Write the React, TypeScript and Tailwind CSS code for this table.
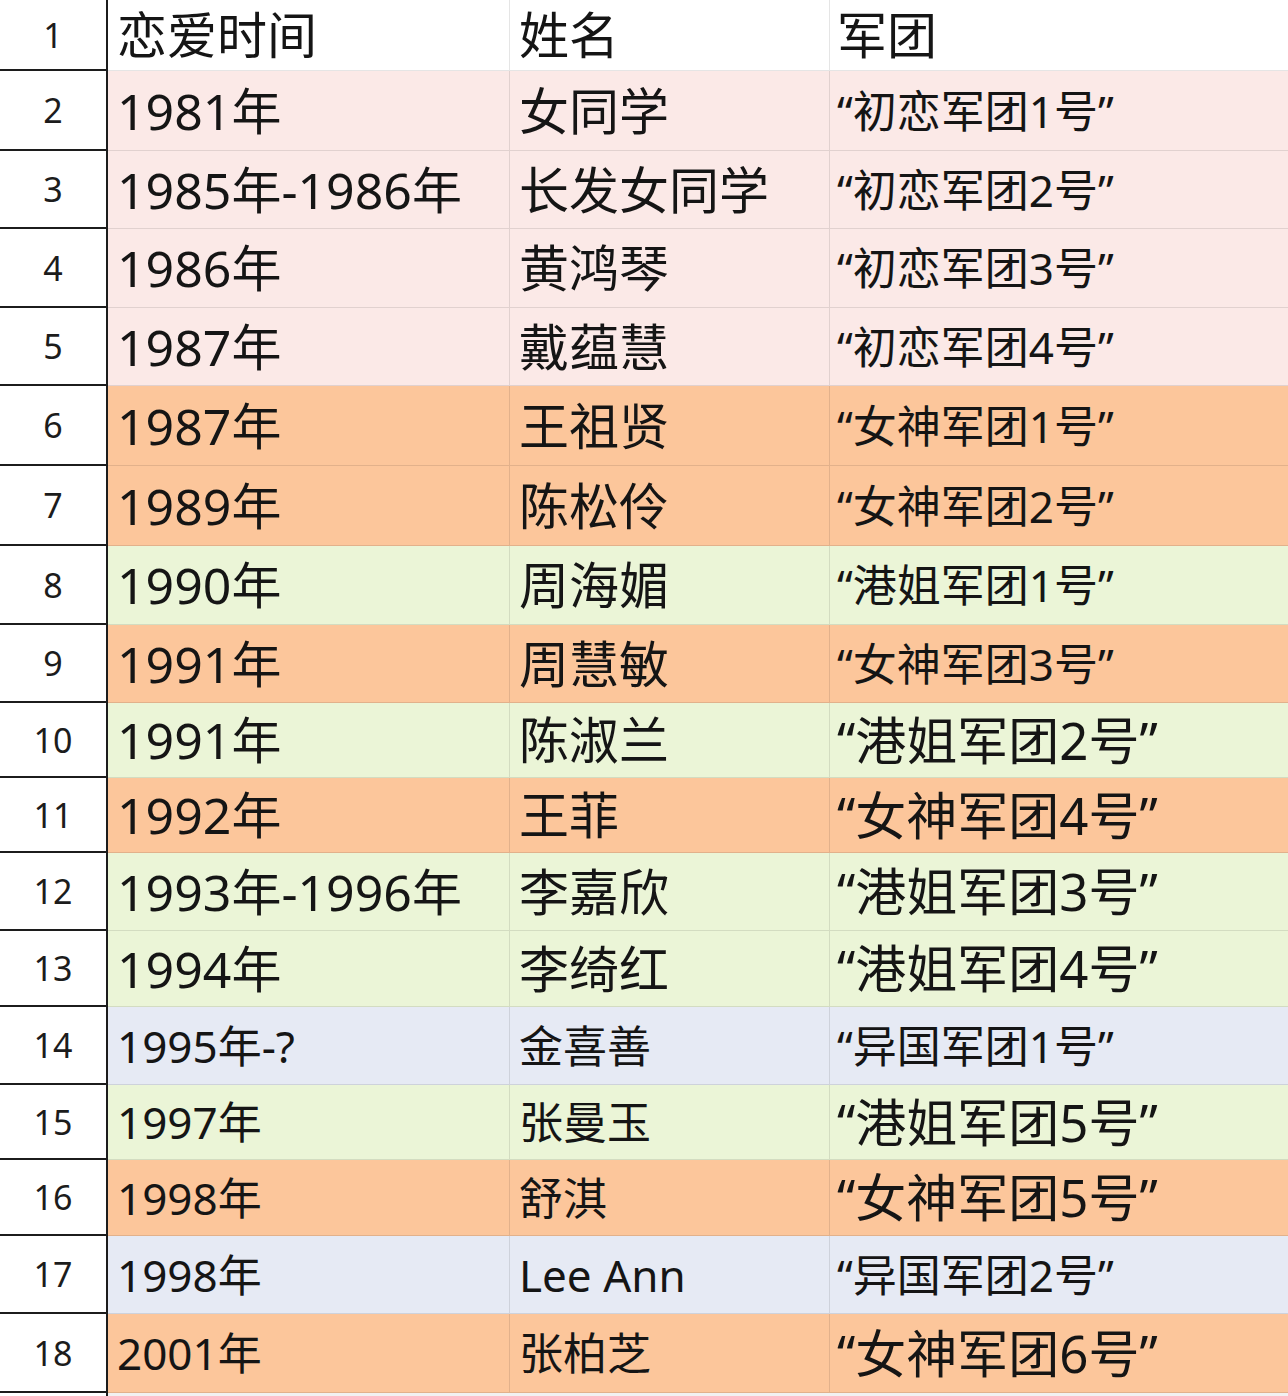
import React from "react";

type Row = {
  n: number;
  h: string;
  bg: string;
  a: string;
  b: string;
  c: string;
  ab: string;
  cs: string;
};

const L = "text-[50px]";
const S = "text-[44px]";
const CL = "text-[51px]";

const PINK = "bg-[#fbe9e7]";
const ORANGE = "bg-[#fcc69b]";
const GREEN = "bg-[#ebf5d7]";
const BLUE = "bg-[#e6eaf4]";
const WHITE = "bg-white";

const rows: Row[] = [
  { n: 1, h: "h-[71px]", bg: WHITE, a: "恋爱时间", b: "姓名", c: "军团", ab: L, cs: L },
  { n: 2, h: "h-[80px]", bg: PINK, a: "1981年", b: "女同学", c: "“初恋军团1号”", ab: L, cs: S },
  { n: 3, h: "h-[78px]", bg: PINK, a: "1985年-1986年", b: "长发女同学", c: "“初恋军团2号”", ab: L, cs: S },
  { n: 4, h: "h-[79px]", bg: PINK, a: "1986年", b: "黄鸿琴", c: "“初恋军团3号”", ab: L, cs: S },
  { n: 5, h: "h-[78px]", bg: PINK, a: "1987年", b: "戴蕴慧", c: "“初恋军团4号”", ab: L, cs: S },
  { n: 6, h: "h-[80px]", bg: ORANGE, a: "1987年", b: "王祖贤", c: "“女神军团1号”", ab: L, cs: S },
  { n: 7, h: "h-[80px]", bg: ORANGE, a: "1989年", b: "陈松伶", c: "“女神军团2号”", ab: L, cs: S },
  { n: 8, h: "h-[79px]", bg: GREEN, a: "1990年", b: "周海媚", c: "“港姐军团1号”", ab: L, cs: S },
  { n: 9, h: "h-[78px]", bg: ORANGE, a: "1991年", b: "周慧敏", c: "“女神军团3号”", ab: L, cs: S },
  { n: 10, h: "h-[75px]", bg: GREEN, a: "1991年", b: "陈淑兰", c: "“港姐军团2号”", ab: L, cs: CL },
  { n: 11, h: "h-[75px]", bg: ORANGE, a: "1992年", b: "王菲", c: "“女神军团4号”", ab: L, cs: CL },
  { n: 12, h: "h-[78px]", bg: GREEN, a: "1993年-1996年", b: "李嘉欣", c: "“港姐军团3号”", ab: L, cs: CL },
  { n: 13, h: "h-[76px]", bg: GREEN, a: "1994年", b: "李绮红", c: "“港姐军团4号”", ab: L, cs: CL },
  { n: 14, h: "h-[78px]", bg: BLUE, a: "1995年-?", b: "金喜善", c: "“异国军团1号”", ab: S, cs: S },
  { n: 15, h: "h-[75px]", bg: GREEN, a: "1997年", b: "张曼玉", c: "“港姐军团5号”", ab: S, cs: CL },
  { n: 16, h: "h-[76px]", bg: ORANGE, a: "1998年", b: "舒淇", c: "“女神军团5号”", ab: S, cs: CL },
  { n: 17, h: "h-[78px]", bg: BLUE, a: "1998年", b: "Lee Ann", c: "“异国军团2号”", ab: S, cs: S },
  { n: 18, h: "h-[79px]", bg: ORANGE, a: "2001年", b: "张柏芝", c: "“女神军团6号”", ab: S, cs: CL },
];

export default function App() {
  return (
    <div className="w-[1288px] bg-white font-['Noto_Sans','Noto_Sans_CJK_SC',sans-serif] text-[#151515]">
      {rows.map((r) => (
        <div key={r.n} className={`flex ${r.h}`}>
          <div className="flex w-[108px] shrink-0 items-center justify-center border-r-2 border-b-2 border-[#1c1c1c] bg-white text-[34px] leading-none text-[#1c1c1c]">
            {r.n}
          </div>
          <div className={`flex flex-1 ${r.bg}`}>
            <div className={`flex w-[402px] shrink-0 items-center border-r border-b border-black/10 pl-[9px] leading-none whitespace-nowrap ${r.ab}`}>
              {r.a}
            </div>
            <div className={`flex w-[320px] shrink-0 items-center border-r border-b border-black/10 pl-[9px] leading-none whitespace-nowrap ${r.ab}`}>
              {r.b}
            </div>
            <div className={`flex flex-1 items-center border-b border-black/10 pl-[7px] leading-none whitespace-nowrap ${r.cs}`}>
              {r.c}
            </div>
          </div>
        </div>
      ))}
      <div className="flex h-[3px]">
        <div className="w-[108px] shrink-0 border-r-2 border-[#1c1c1c] bg-white" />
        <div className="flex-1 bg-[#f2f2f2]" />
      </div>
    </div>
  );
}
